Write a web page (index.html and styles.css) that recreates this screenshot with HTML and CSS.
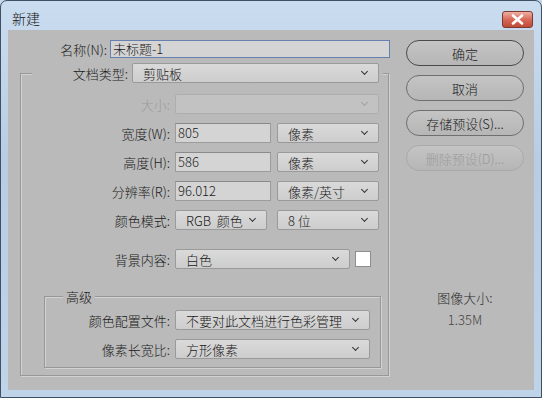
FILE: index.html
```html
<!DOCTYPE html>
<html lang="zh-CN">
  <head>
    <meta charset="UTF-8" />
    <title>新建</title>
    <link rel="stylesheet" href="styles.css">
  </head>
  <body>
    <div class="window">
      <div class="titlebar">
        <span class="title">新建</span>
        <button class="close" aria-label="关闭">
          <svg width="13" height="11" viewBox="0 0 13 11">
            <path d="M2 1.5 L11 9.5 M11 1.5 L2 9.5" stroke="#fff" stroke-width="2.6" stroke-linecap="round" fill="none" />
          </svg>
        </button>
      </div>
      <div class="content">
        <div class="left">
          <div class="name-row">
            <label class="name-label">名称(N):</label>
            <div class="input name-input">未标题-1</div>
          </div>

          <fieldset class="doc-box">
            <legend class="doc-legend">
              <span class="doc-label">文档类型:</span>
              <div class="select doc-select"><span>剪贴板</span></div>
            </legend>

            <div class="row disabled">
              <span class="label">大小:</span>
              <div class="select wide"><span></span></div>
            </div>
            <div class="row">
              <span class="label">宽度(W):</span>
              <div class="input num">805</div>
              <div class="select unit"><span>像素</span></div>
            </div>
            <div class="row">
              <span class="label">高度(H):</span>
              <div class="input num">586</div>
              <div class="select unit"><span>像素</span></div>
            </div>
            <div class="row">
              <span class="label">分辨率(R):</span>
              <div class="input num">96.012</div>
              <div class="select unit"><span>像素/英寸</span></div>
            </div>
            <div class="row row-mode">
              <span class="label">颜色模式:</span>
              <div class="select mode"><span>RGB&nbsp; 颜色</span></div>
              <div class="select unit"><span>8 位</span></div>
            </div>
            <div class="row">
              <span class="label">背景内容:</span>
              <div class="select bg"><span>白色</span></div>
              <div class="swatch"></div>
            </div>

            <fieldset class="adv-box">
              <legend class="adv-legend">高级</legend>
              <div class="row">
                <span class="label adv-label">颜色配置文件:</span>
                <div class="select adv"><span>不要对此文档进行色彩管理</span></div>
              </div>
              <div class="row last">
                <span class="label adv-label">像素长宽比:</span>
                <div class="select adv"><span>方形像素</span></div>
              </div>
            </fieldset>
          </fieldset>
        </div>

        <div class="right">
          <button class="btn default">确定</button>
          <button class="btn">取消</button>
          <button class="btn">存储预设(S)...</button>
          <button class="btn" disabled>删除预设(D)...</button>
          <div class="size-title">图像大小:</div>
          <div class="size-value">1.35M</div>
        </div>
      </div>
    </div>
  </body>
</html>
```

FILE: styles.css
```css
body {
  margin: 0;
  font-family: "Noto Sans CJK SC", "Noto Sans", sans-serif;
  font-size: 13px;
  font-weight: 300;
  color: #1a1a1a;
  background: #c4d8ec;
}
.window {
  width: 542px;
  height: 398px;
  box-sizing: border-box;
  border: 1px solid #3e5064;
  border-radius: 7px 7px 0 0;
  background: linear-gradient(#cadcef, #b8cde4 40%, #bfd3e9);
  display: flex;
  flex-direction: column;
  overflow: hidden;
}
.titlebar {
  height: 29px;
  display: flex;
  justify-content: space-between;
  align-items: flex-start;
  padding: 0 8px 0 11px;
}
.title {
  font-size: 14px;
  line-height: 17px;
  margin-top: 9px;
  color: #111;
}
.close {
  width: 31px;
  height: 17px;
  margin-top: 10px;
  padding: 0;
  border: 1px solid #7a3a33;
  border-radius: 3px;
  background: linear-gradient(#eeb0a4, #d76a58 50%, #c04a38);
  display: flex;
  align-items: center;
  justify-content: center;
}
.content {
  margin: 0 7px;
  height: 360px;
  background: #bababa;
  display: flex;
}
.left {
  width: 384px;
  padding-top: 10px;
}
.name-row {
  display: flex;
  align-items: center;
  height: 18px;
}
.name-label {
  width: 99px;
  text-align: right;
  margin-right: 3px;
}
.input {
  box-sizing: border-box;
  height: 20px;
  line-height: 18px;
  padding: 0 2px;
  background: #d4d4d4;
  border: 1px solid #9c9c9c;
  border-top-color: #8a8a8a;
  white-space: nowrap;
}
.name-input {
  width: 280px;
  height: 18px;
  line-height: 16px;
  border-color: #6680b0;
}
.select {
  box-sizing: border-box;
  height: 20px;
  display: flex;
  align-items: center;
  padding: 0 11px 0 10px;
  border: 1px solid #9a9a9a;
  border-radius: 2px;
  background: linear-gradient(#dadada, #cdcdcd);
  white-space: nowrap;
}
.select span {
  flex: 1;
}
.select::after {
  content: "";
  width: 4px;
  height: 4px;
  margin-top: -3px;
  border-right: 1px solid #333;
  border-bottom: 1px solid #333;
  transform: rotate(45deg);
}
.doc-box {
  margin: 5px 0 0 12px;
  width: 369px;
  box-sizing: border-box;
  min-width: 0;
  padding: 11px 0 7px 0;
  border: 1px solid #979797;
  box-shadow: 1px 1px 0 #d2d2d2, inset 1px 1px 0 #d2d2d2;
}
.doc-legend {
  display: flex;
  align-items: center;
  margin-left: 11px;
  padding: 0;
  width: 351px;
  background: #bababa;
}
.doc-label {
  width: 96px;
  margin-right: 4px;
  text-align: right;
}
.doc-select {
  width: 247px;
}
.row {
  display: flex;
  align-items: center;
  height: 20px;
  margin-bottom: 9px;
}
.row.last {
  margin-bottom: 0;
}
.row-mode {
  margin-bottom: 19px;
}
.label {
  width: 149px;
  margin-right: 5px;
  text-align: right;
}
.disabled .label {
  color: #9b9b9b;
}
.disabled .select {
  background: #c2c2c2;
  border-color: #adadad;
}
.disabled .select::after {
  border-color: #a0a0a0;
}
.wide {
  width: 204px;
}
.num {
  width: 96px;
  margin-right: 6px;
}
.unit {
  width: 102px;
}
.mode {
  width: 92px;
  margin-right: 10px;
}
.bg {
  width: 175px;
  margin-right: 5px;
}
.swatch {
  width: 16px;
  height: 16px;
  box-sizing: border-box;
  background: #fff;
  border: 1px solid #8e8e8e;
}
.adv-box {
  margin: 19px 0 0 23px;
  width: 337px;
  box-sizing: border-box;
  min-width: 0;
  padding: 5px 0 8px 0;
  border: 1px solid #979797;
  box-shadow: 1px 1px 0 #d2d2d2, inset 1px 1px 0 #d2d2d2;
}
.adv-legend {
  margin-left: 18px;
  padding: 0 3px;
  line-height: 17px;
  background: #bababa;
}
.adv-label {
  width: 125px;
}
.adv {
  width: 195px;
}
.right {
  width: 118px;
  margin-left: 14px;
  padding-top: 10px;
  display: flex;
  flex-direction: column;
  align-items: center;
}
.btn {
  width: 118px;
  height: 26px;
  margin-bottom: 9px;
  border: 1px solid #6f6f6f;
  border-radius: 13px;
  background: linear-gradient(#c4c4c4, #b6b6b6);
  font-family: "Noto Sans CJK SC", "Noto Sans", sans-serif;
  font-size: 13px;
  font-weight: 300;
  color: #1a1a1a;
  padding: 0;
}
.btn.default {
  border-color: #4a4a4a;
}
.btn:disabled {
  border-color: #a9a9a9;
  color: #9a9a9a;
}
.size-title {
  margin-top: 109px;
  line-height: 17px;
  color: #2a2a2a;
}
.size-value {
  margin-top: 5px;
  line-height: 17px;
  color: #454545;
}
```
